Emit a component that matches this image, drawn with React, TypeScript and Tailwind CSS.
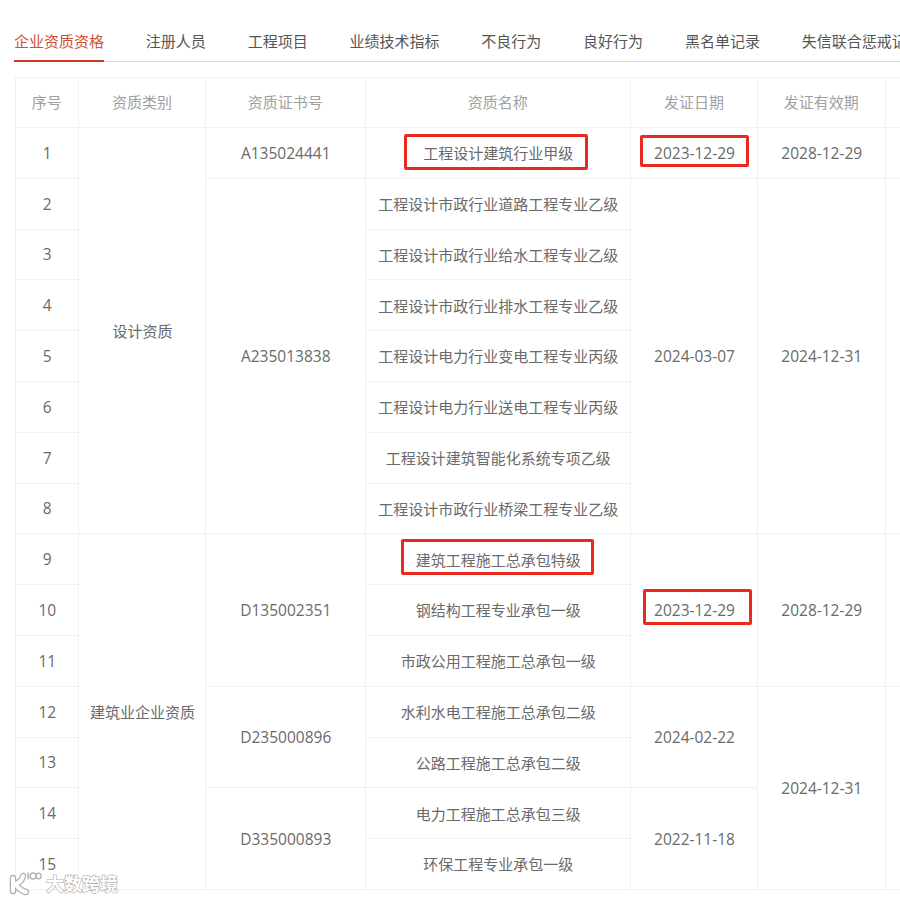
const tabs = ["企业资质资格", "注册人员", "工程项目", "业绩技术指标", "不良行为", "良好行为", "黑名单记录", "失信联合惩戒记录"];

type Row = {
  name: string;
  frame?: string;
  category?: [string, number];
  cert?: [string, number];
  date?: [string, number, string?];
  valid?: [string, number];
};

const rows: Row[] = [
  {
    name: "工程设计建筑行业甲级",
    frame: "-left-[19px] -right-[15px] -top-[8px] -bottom-[6px]",
    category: ["设计资质", 8],
    cert: ["A135024441", 1],
    date: ["2023-12-29", 1, "-left-[14px] -right-[14px] -top-[7px] -bottom-[3px]"],
    valid: ["2028-12-29", 1],
  },
  { name: "工程设计市政行业道路工程专业乙级", cert: ["A235013838", 7], date: ["2024-03-07", 7], valid: ["2024-12-31", 7] },
  { name: "工程设计市政行业给水工程专业乙级" },
  { name: "工程设计市政行业排水工程专业乙级" },
  { name: "工程设计电力行业变电工程专业丙级" },
  { name: "工程设计电力行业送电工程专业丙级" },
  { name: "工程设计建筑智能化系统专项乙级" },
  { name: "工程设计市政行业桥梁工程专业乙级" },
  {
    name: "建筑工程施工总承包特级",
    frame: "-left-[15px] -right-[13px] -top-[10px] -bottom-[4px]",
    category: ["建筑业企业资质", 7],
    cert: ["D135002351", 3],
    date: ["2023-12-29", 3, "-left-[11px] -right-[17px] -top-[10px] -bottom-[4px]"],
    valid: ["2028-12-29", 3],
  },
  { name: "钢结构工程专业承包一级" },
  { name: "市政公用工程施工总承包一级" },
  { name: "水利水电工程施工总承包二级", cert: ["D235000896", 2], date: ["2024-02-22", 2], valid: ["2024-12-31", 4] },
  { name: "公路工程施工总承包二级" },
  { name: "电力工程施工总承包三级", cert: ["D335000893", 2], date: ["2022-11-18", 2] },
  { name: "环保工程专业承包一级" },
];

const cell = "border border-[#eff1f3] text-center align-middle p-0";
const body = "pt-[1px] pl-[1px]";
const num = "text-[15.5px] [font-family:'Open_Sans','Noto_Sans',sans-serif]";

function Framed({ text, frame }: { text: string; frame: string }) {
  return (
    <span className="relative inline-block leading-[22px]">
      {text}
      <span className={`absolute rounded-[2px] border-[3px] border-[#ea2a20] ${frame}`} />
    </span>
  );
}

export default function App() {
  return (
    <div
      className="relative h-[901px] w-[900px] overflow-hidden bg-white text-[15px] text-[#6a6a6a]"
      style={{ fontFamily: '"Noto Sans CJK SC", "Noto Sans", sans-serif' }}
    >
      <div className="ml-[14px] mt-[27px] flex h-[35px] w-[900px] gap-[41.8px] border-b border-[#dcdcdc]">
        {tabs.map((t, i) => (
          <div
            key={t}
            className={
              i === 0
                ? "h-[35px] shrink-0 border-b-[2px] border-[#c8391d] leading-[28px] text-[#cc5237]"
                : "shrink-0 leading-[28px] text-[#555]"
            }
          >
            {t}
          </div>
        ))}
      </div>

      <table className="ml-[14.5px] mt-[14.5px] w-[1000px] table-fixed border-collapse">
        <colgroup>
          <col className="w-[63.5px]" />
          <col className="w-[127px]" />
          <col className="w-[159.5px]" />
          <col className="w-[265.5px]" />
          <col className="w-[127px]" />
          <col className="w-[127.5px]" />
          <col />
        </colgroup>
        <thead>
          <tr className="h-[50.5px] text-[#a0a0a0]">
            {["序号", "资质类别", "资质证书号", "资质名称", "发证日期", "发证有效期", ""].map((h, i) => (
              <th key={i} className={`${cell} font-normal`}>
                {h}
              </th>
            ))}
          </tr>
        </thead>
        <tbody>
          {rows.map((r, i) => (
            <tr key={r.name} className="h-[50.8px]">
              <td className={`${cell} ${body} ${num}`}>{i + 1}</td>
              {r.category && (
                <td rowSpan={r.category[1]} className={`${cell} ${body}`}>
                  {r.category[0]}
                </td>
              )}
              {r.cert && (
                <td rowSpan={r.cert[1]} className={`${cell} ${body} ${num}`}>
                  {r.cert[0]}
                </td>
              )}
              <td className={`${cell} ${body}`}>{r.frame ? <Framed text={r.name} frame={r.frame} /> : r.name}</td>
              {r.date && (
                <td rowSpan={r.date[1]} className={`${cell} ${body} ${num}`}>
                  {r.date[2] ? <Framed text={r.date[0]} frame={r.date[2]} /> : r.date[0]}
                </td>
              )}
              {r.valid && (
                <>
                  <td rowSpan={r.valid[1]} className={`${cell} ${body} ${num}`}>
                    {r.valid[0]}
                  </td>
                  <td rowSpan={r.valid[1]} className={cell} />
                </>
              )}
            </tr>
          ))}
        </tbody>
      </table>

      {/* watermark */}
      <div className="absolute left-[8px] top-[870px] flex items-center gap-[4px] text-white">
        <svg width="34" height="26" viewBox="0 0 34 26" fill="none" strokeLinecap="round">
          <g stroke="#b0b0b0" strokeWidth="6.5">
            <path d="M5 8 L5 21 M7 14 C11 13 14 10 15 6 M8 15 C11 19 14 21 18 22" />
          </g>
          <g stroke="#fff" strokeWidth="4">
            <path d="M5 8 L5 21 M7 14 C11 13 14 10 15 6 M8 15 C11 19 14 21 18 22" />
          </g>
          <g stroke="#b5b5b5" strokeWidth="1.4">
            <path d="M20 3 L20 9" />
            <circle cx="25" cy="6" r="3" />
            <circle cx="30.5" cy="6" r="2.8" />
          </g>
        </svg>
        <span className="text-[18px] font-bold leading-none [-webkit-text-stroke:1.2px_#adadad] [paint-order:stroke_fill]">
          大数跨境
        </span>
      </div>
    </div>
  );
}
